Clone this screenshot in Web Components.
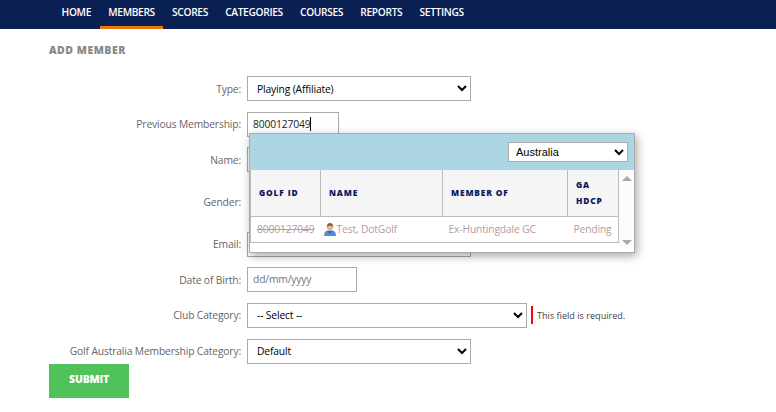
<!DOCTYPE html>
<html>
<head>
<meta charset="utf-8">
<title>Add Member</title>
<style>
  body { margin: 0; background: #fff; font-family: "Open Sans", sans-serif; font-size: 10px; color: #666; }
</style>
</head>
<body>
<app-nav>
  <nav-link>HOME</nav-link>
  <nav-link active>MEMBERS</nav-link>
  <nav-link>SCORES</nav-link>
  <nav-link>CATEGORIES</nav-link>
  <nav-link>COURSES</nav-link>
  <nav-link>REPORTS</nav-link>
  <nav-link>SETTINGS</nav-link>
</app-nav>

<add-member-form>
  <form-row label="Type:"><form-select width="224" options="Playing (Affiliate)"></form-select></form-row>
  <form-row label="Previous Membership:">
    <text-box width="92" caret>8000127049</text-box>
    <member-popup></member-popup>
  </form-row>
  <form-row label="Name:"><text-box width="224"></text-box></form-row>
  <form-row label="Gender:" tall></form-row>
  <form-row label="Email:"><text-box width="224"></text-box></form-row>
  <form-row label="Date of Birth:"><text-box width="110" placeholder>dd/mm/yyyy</text-box></form-row>
  <form-row label="Club Category:">
    <form-select width="280" options="-- Select --"></form-select>
    <field-error>This field is required.</field-error>
  </form-row>
  <form-row label="Golf Australia Membership Category:"><form-select width="224" options="Default"></form-select></form-row>
</add-member-form>

<script>
// top navigation
class AppNav extends HTMLElement {
  constructor() {
    super();
    this.attachShadow({ mode: "open" });
    this.shadowRoot.innerHTML = `
      <style>
        :host { display: flex; height: 29px; padding-left: 53px; background: #0b2052; }
      </style>
      <slot></slot>`;
  }
}
customElements.define("app-nav", AppNav);

class NavLink extends HTMLElement {
  constructor() {
    super();
    this.attachShadow({ mode: "open" });
    this.shadowRoot.innerHTML = `
      <style>
        :host {
          display: flex; align-items: center; box-sizing: border-box; height: 29px;
          padding: 0 8.6px 2px; color: #fff; font: 600 10.2px "Open Sans", sans-serif; letter-spacing: -.33px;
          border-bottom: 3px solid transparent;
        }
        :host([active]) { border-bottom-color: #e8780e; }
      </style>
      <slot></slot>`;
  }
}
customElements.define("nav-link", NavLink);

class AddMemberForm extends HTMLElement {
  constructor() {
    super();
    this.attachShadow({ mode: "open" });
    this.shadowRoot.innerHTML = `
      <style>
        :host { display: block; padding: 0 49px; }
        h1 {
          margin: 0; height: 47px; font: 800 10.5px/42px "Open Sans", sans-serif;
          color: #888; letter-spacing: .5px;
        }
        .rows { display: flex; flex-direction: column; gap: 10.67px; }
        button {
          display: block; width: 80px; height: 34px; border: 0; padding: 0 0 4px; background: #4fc35a; color: #fff;
          font: 800 10.5px "Open Sans", sans-serif; letter-spacing: -.2px;
        }
      </style>
      <h1>ADD MEMBER</h1>
      <div class="rows"><slot></slot></div>
      <button>SUBMIT</button>`;
  }
}
customElements.define("add-member-form", AddMemberForm);

class FormRow extends HTMLElement {
  constructor() {
    super();
    this.attachShadow({ mode: "open" });
    this.shadowRoot.innerHTML = `
      <style>
        :host { display: flex; align-items: center; position: relative; height: 25px; gap: 6px; }
        :host([tall]) { height: 38px; }
        label { flex: 0 0 192px; text-align: right; color: #666; font: 10.3px "Open Sans", sans-serif; letter-spacing: -.15px; white-space: nowrap; }
        .field { display: flex; align-items: center; gap: 4px; }
      </style>
      <label></label>
      <div class="field"><slot></slot></div>`;
    this.shadowRoot.querySelector("label").textContent = this.getAttribute("label");
  }
}
customElements.define("form-row", FormRow);

class TextBox extends HTMLElement {
  constructor() {
    super();
    this.attachShadow({ mode: "open" });
    this.shadowRoot.innerHTML = `
      <style>
        :host {
          display: flex; align-items: center; box-sizing: border-box; height: 25px; padding: 0 5px 1px;
          background: #fff; border: 1px solid #aaa; color: #222; font: 10.3px "Open Sans", sans-serif; letter-spacing: -.15px;
        }
        :host([placeholder]) { color: #757575; }
        .caret { display: none; width: 1px; height: 14px; background: #000; }
        :host([caret]) .caret { display: block; }
      </style>
      <slot></slot><span class="caret"></span>`;
    this.style.width = this.getAttribute("width") + "px";
  }
}
customElements.define("text-box", TextBox);

class FormSelect extends HTMLElement {
  constructor() {
    super();
    this.attachShadow({ mode: "open" });
    this.shadowRoot.innerHTML = `
      <style>
        :host { display: block; }
        select {
          display: block; box-sizing: border-box; width: 100%; height: 25px; padding: 0 5px;
          background: #fff; border: 1px solid #aaa; border-radius: 0; color: #000; outline: 0;
          font: 10.3px "Open Sans", sans-serif; letter-spacing: -.15px;
        }
      </style>
      <select></select>`;
    this.style.width = this.getAttribute("width") + "px";
    const opt = document.createElement("option");
    opt.textContent = this.getAttribute("options");
    this.shadowRoot.querySelector("select").appendChild(opt);
  }
}
customElements.define("form-select", FormSelect);

class FieldError extends HTMLElement {
  constructor() {
    super();
    this.attachShadow({ mode: "open" });
    this.shadowRoot.innerHTML = `
      <style>
        :host {
          display: flex; align-items: center; height: 18px; padding-left: 4px; border-left: 2px solid #f00;
          color: #444; font: 9.1px "Open Sans", sans-serif; white-space: nowrap;
        }
      </style>
      <slot></slot>`;
  }
}
customElements.define("field-error", FieldError);

// lookup results, hangs over the rows below the membership box
class MemberPopup extends HTMLElement {
  constructor() {
    super();
    this.attachShadow({ mode: "open" });
    this.shadowRoot.innerHTML = `
      <style>
        :host {
          position: absolute; left: 200px; top: 21px; box-sizing: border-box; width: 386px; height: 120px;
          display: flex; flex-direction: column; background: #fff; border: 1px solid #aaa;
          box-shadow: 2px 3px 9px rgba(0,0,0,.35); z-index: 5;
        }
        .head { flex: 0 0 36px; display: flex; align-items: center; justify-content: flex-end; padding-right: 6px; background: #add6e5; }
        select {
          width: 120px; height: 20px; padding: 0 3px; border: 1px solid #aaa; background: #fff; border-radius: 0;
          font: 11px "Liberation Sans", sans-serif; color: #000; outline: 0;
        }
        .body { display: flex; align-items: flex-start; }
        table { border-collapse: collapse; width: 369px; table-layout: fixed; border: 1px solid #bbb; border-top: 0; }
        th {
          height: 45px; padding: 1px 0 0 8px; text-align: left; background: #f5f5f5; border: 1px solid #bbb; border-top: 0;
          font: 800 8.4px/16px "Open Sans", sans-serif; letter-spacing: .85px; color: #0b1a60;
        }
        td { height: 25px; padding: 0 0 0 6px; font: 10.3px "Open Sans", sans-serif; letter-spacing: -.15px; color: #b79a9f; white-space: nowrap; }
        td svg { vertical-align: -3px; margin-right: 1px; }
        .id { text-decoration: line-through; }
        .scroll { flex: 0 0 15px; height: 76px; display: flex; flex-direction: column; justify-content: space-between; align-items: center; padding: 6px 0 1px; box-sizing: border-box; background: #fcfcfc; }
        .scroll i { width: 0; height: 0; border: 5px solid transparent; }
        .up { border-top: 0 !important; border-bottom: 5px solid #aaa !important; }
        .down { border-bottom: 0 !important; border-top: 5px solid #aaa !important; }
      </style>
      <div class="head"><select><option>Australia</option></select></div>
      <div class="body">
        <table>
          <colgroup><col style="width:70px"><col style="width:122px"><col style="width:125px"><col></colgroup>
          <tr><th>GOLF ID</th><th>NAME</th><th>MEMBER OF</th><th>GA<br>HDCP</th></tr>
          <tr>
            <td class="id">8000127049</td>
            <td style="padding-left:3px"><svg width="12" height="13" viewBox="0 0 12 13"><path d="M0 13c0-3 1-5 3.500-5.500h5c2.500.5 3.500 2.500 3.500 5.500z" fill="#4f8fd8"/><path d="M3 8l3 3 3-3z" fill="#2f6fc0"/><circle cx="6" cy="4.500" r="3" fill="#e5b48f"/><path d="M2.800 4.500C2.500 1.500 4 0 6 0s3.500 1.500 3.200 4.500C8.500 3 7.500 2.800 6 2.800S3.500 3 2.800 4.500z" fill="#8a5a34"/></svg>Test, DotGolf</td>
            <td>Ex-Huntingdale GC</td>
            <td>Pending</td>
          </tr>
        </table>
        <div class="scroll"><i class="up"></i><i class="down"></i></div>
      </div>`;
  }
}
customElements.define("member-popup", MemberPopup);
</script>
</body>
</html>
